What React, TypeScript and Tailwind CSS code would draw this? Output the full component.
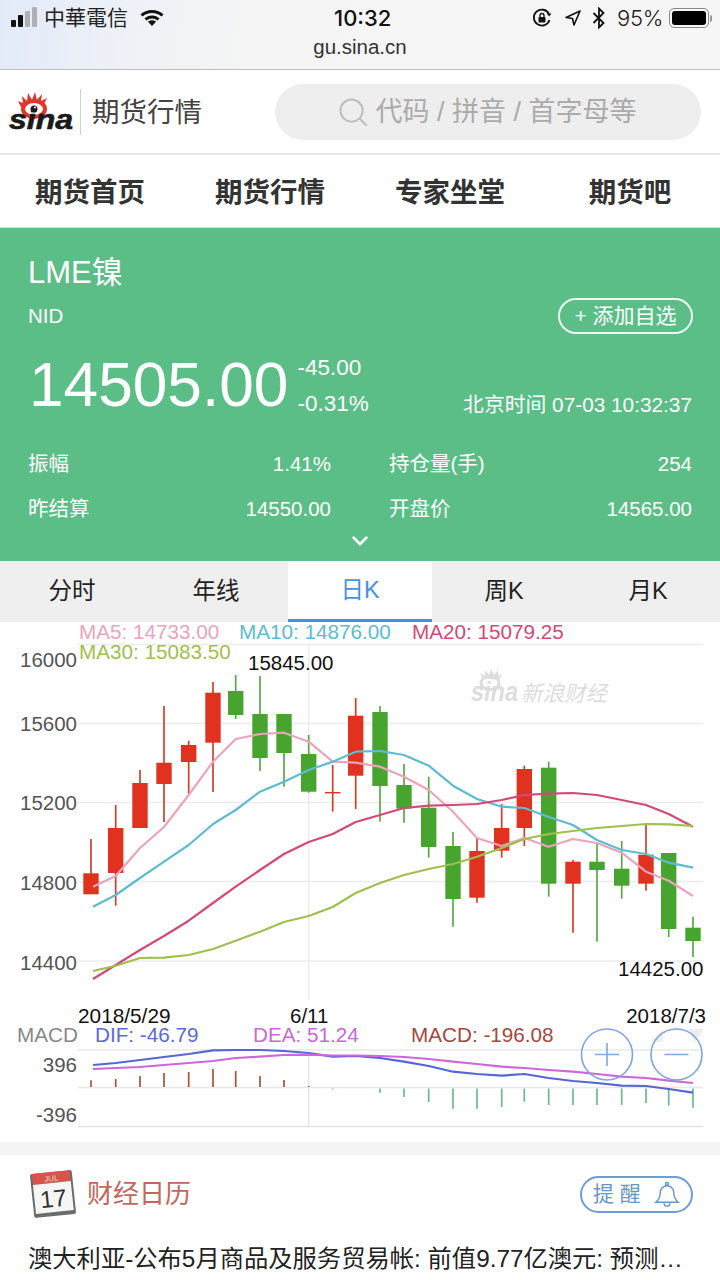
import React from "react";

const SANS = "[font-family:'Liberation_Sans','Noto_Sans_CJK_SC',sans-serif]";

type C = [number, number, number, number, number, "r" | "g"];
const candles: C[] = [
  [91, 839, 894.3, 873.3, 894.3, "r"],
  [115.7, 805, 905.7, 828, 873, "r"],
  [140, 770, 828, 783, 828, "r"],
  [164, 706, 822, 762.7, 784, "r"],
  [188.7, 740.7, 794, 745, 762, "r"],
  [213, 682, 792, 692.7, 742.7, "r"],
  [235.7, 675, 719, 691, 715, "g"],
  [260, 676, 771, 714, 758, "g"],
  [284, 714, 786.7, 714, 753, "g"],
  [308.7, 735, 792.7, 754, 791.7, "g"],
  [332.7, 765, 811.7, 792, 793.4, "r"],
  [355.7, 698, 809, 715.7, 775.7, "r"],
  [380, 706, 821.7, 712, 786, "g"],
  [404, 764, 822.7, 785, 808.7, "g"],
  [428.7, 776.7, 857.7, 807.7, 847, "g"],
  [453, 832, 926.7, 846, 899, "g"],
  [477, 839, 902.7, 851, 897.7, "r"],
  [501.7, 804, 857.7, 828, 850.7, "r"],
  [524.3, 765.7, 846, 769, 828, "r"],
  [548.7, 761.7, 896.7, 767.7, 883.7, "g"],
  [573, 860, 932.7, 861.7, 883.7, "r"],
  [597, 843, 941.7, 861.7, 870, "g"],
  [621.7, 841, 898.7, 868.7, 885.7, "g"],
  [646, 825, 890.7, 854.7, 883.7, "r"],
  [668.7, 853, 937, 853, 929, "g"],
  [693, 916.7, 957, 927.7, 941, "g"],
];

const xs = candles.map((c) => c[0]);
const line = (ys: number[]) => ys.map((y, i) => `${i === 0 ? 93 : xs[i]},${y}`).join(" ");

const ma5 = [886.7, 876, 848, 827, 795, 761.7, 739, 734, 732.7, 741.7, 761.7, 762.7, 766.7, 776.7, 790, 811.7, 838, 846, 838, 846.7, 839, 843, 852.7, 871.7, 880.7, 896];
const ma10 = [906.7, 895, 878, 861.7, 845, 824, 810, 791.7, 781.7, 770, 761.7, 751.7, 751, 755, 765.7, 785.7, 799, 806.7, 808, 817, 825, 840, 850, 854, 862.7, 867.7];
const ma20 = [979, 965, 950, 936, 920.7, 903, 886.7, 870, 854, 842, 834, 822, 815, 808, 805.7, 805, 804, 800, 795, 793.7, 793, 795, 800, 805, 814, 826.7];
const ma30 = [971, 965.7, 958, 957.7, 955, 949, 940.7, 931.7, 922, 916, 907, 893, 883, 875, 869, 864, 856.7, 848, 839, 834, 831, 828, 826, 824, 824.3, 826];
const dif = [1065, 1063, 1060, 1057, 1054, 1050.3, 1050, 1050, 1051, 1053, 1056.7, 1056, 1058, 1061.7, 1066, 1071.7, 1074, 1075.7, 1074, 1078, 1081, 1083, 1085.7, 1086, 1089, 1092.7];
const dea = [1069, 1068, 1067, 1065, 1063, 1061, 1058, 1056.7, 1055, 1054.7, 1055.5, 1055.5, 1056, 1057, 1059, 1061.7, 1064, 1066.7, 1068, 1070, 1071.7, 1074, 1076.7, 1078, 1080.7, 1083];
const bars = [1080.3, 1079, 1076, 1073, 1072, 1069, 1071, 1076, 1080, 1086, 1089.5, 1088.5, 1092.7, 1097, 1102, 1108.7, 1108.7, 1107, 1101.7, 1105, 1105, 1105, 1105, 1103, 1105.7, 1107.7];

const gridY = [644.5, 723.5, 802.5, 881.5, 961];
const axis: [string, number][] = [["16000", 667], ["15600", 731], ["15200", 810], ["14800", 890], ["14400", 970], ["396", 1072], ["-396", 1122]];

function Chart() {
  return (
    <svg viewBox="0 616 720 526" className={`block w-[720px] h-[526px] -mt-[6px] shrink-0 ${SANS}`}>
      {gridY.map((y) => (
        <line key={y} x1="78" x2="703" y1={y} y2={y} stroke="#ececec" strokeWidth="1.5" />
      ))}
      <line x1="308.7" x2="308.7" y1="645" y2="1000" stroke="#ececec" strokeWidth="1.5" />
      <line x1="78" x2="703" y1="1050" y2="1050" stroke="#e8e8e8" strokeWidth="1.5" />
      <line x1="78" x2="703" y1="1087.5" y2="1087.5" stroke="#e8e8e8" strokeWidth="1.5" />
      <line x1="78" x2="703" y1="1126.5" y2="1126.5" stroke="#e2e2e2" strokeWidth="1.5" />
      <line x1="308.7" x2="308.7" y1="1050" y2="1126" stroke="#e6e6e6" strokeWidth="1.5" />

      {/* watermark */}
      <g fill="#dddddd">
        <text x="471" y="701" fontSize="27" fontWeight="700" fontStyle="italic" textLength="47" lengthAdjust="spacingAndGlyphs">sina</text>
        <ellipse cx="490" cy="683" rx="9" ry="6.5" fill="none" stroke="#dddddd" strokeWidth="3" />
        <path d="M482 678l-2-5 5 3 0-6 4 5 2-6 3 6 4-5 0 6 4-2-3 6z" />
        <text x="521" y="701" fontSize="21.500" fontStyle="italic">新浪财经</text>
      </g>

      {candles.map(([x, hi, lo, top, bot, k]) => {
        const c = k === "r" ? "#e0321f" : "#47a52f";
        const w = k === "r" ? "#d0402f" : "#5aa848";
        return (
          <g key={x}>
            <line x1={x} x2={x} y1={hi} y2={lo} stroke={w} strokeWidth="1.7" />
            <rect x={x - 7.7} y={top} width="15.4" height={bot - top} fill={c} />
          </g>
        );
      })}

      <g fill="none" strokeWidth="2.2" strokeLinejoin="round">
        <polyline points={line(ma5)} stroke="#eba4bd" />
        <polyline points={line(ma10)} stroke="#5cbcd0" />
        <polyline points={line(ma20)} stroke="#d2497a" />
        <polyline points={line(ma30)} stroke="#9fc04c" />
      </g>

      <g fontSize="20.700">
        <text x="79" y="639" fill="#eba4bd">MA5: 14733.00</text>
        <text x="239" y="639" fill="#5cbcd0">MA10: 14876.00</text>
        <text x="412" y="639" fill="#d2497a">MA20: 15079.25</text>
        <text x="79" y="659" fill="#9fc04c">MA30: 15083.50</text>
      </g>
      <g fontSize="20.500" fill="#555" textAnchor="end">
        {axis.map(([t, y]) => (
          <text key={t} x="77" y={y}>{t}</text>
        ))}
      </g>
      <g fontSize="20.500" fill="#111">
        <text x="248" y="670">15845.00</text>
        <text x="618" y="976">14425.00</text>
        <text x="78" y="1023" fontSize="20.800">2018/5/29</text>
        <text x="290" y="1023">6/11</text>
        <text x="706" y="1023" textAnchor="end">2018/7/3</text>
      </g>
      <g fontSize="20.700">
        <text x="17" y="1042" fill="#888">MACD</text>
        <text x="95" y="1042" fill="#5a6ad8">DIF: -46.79</text>
        <text x="253" y="1042" fill="#c968d8">DEA: 51.24</text>
        <text x="411" y="1042" fill="#a5473f">MACD: -196.08</text>
      </g>

      {bars.map((y, i) => (
        <line
          key={i}
          x1={xs[i]}
          x2={xs[i]}
          y1={i < 10 ? y : 1088.5}
          y2={i < 10 ? 1087 : y}
          stroke={i < 10 ? "#a9533f" : "#6cb897"}
          strokeWidth="1.7"
        />
      ))}
      <polyline points={line(dif)} fill="none" stroke="#5566d6" strokeWidth="2.2" strokeLinejoin="round" />
      <polyline points={line(dea)} fill="none" stroke="#cf66dc" strokeWidth="2.2" strokeLinejoin="round" />

      {/* zoom controls */}
      <path d="M650 1042l13-13v13z M688 1029h16l-9 13z" fill="#eeeeee" />
      <g fill="none" stroke="#7fa6e0" strokeWidth="1.6">
        <circle cx="607" cy="1054.5" r="25.5" />
        <circle cx="676.5" cy="1054.5" r="25.5" />
        <path d="M595 1054.5h24 M607 1043v23 M664.5 1054.5h24" />
      </g>
    </svg>
  );
}

function SinaLogo() {
  return (
    <svg viewBox="0 0 70 50" className="w-[70px] h-[50px] shrink-0 [font-family:'Liberation_Sans',sans-serif]">
      <path d="M15 20l-3-6 5 2-1-7 5 5 1-8 4 7 3-8 2 8 5-6-1 7 6-3-4 8z" fill="#e2352a" />
      <ellipse cx="28" cy="22" rx="11" ry="8" fill="#fff" stroke="#e2352a" strokeWidth="4" />
      <circle cx="28" cy="22" r="3.5" fill="#2a1a1a" />
      <circle cx="29" cy="20.5" r="1" fill="#fff" />
      <text x="3" y="42" fontSize="27" fontWeight="700" fontStyle="italic" fill="#1a1a1a" stroke="#1a1a1a" strokeWidth="0.6" textLength="64" lengthAdjust="spacingAndGlyphs">sina</text>
    </svg>
  );
}

function StatusBar() {
  return (
    <div className="h-[70px] border-b border-[#bdbdbd] bg-[linear-gradient(100deg,#e2eaf9_0%,#eef1f7_18%,#f5f5f5_35%,#f6f6f6_100%)] relative shrink-0">
      <div className="h-9 flex items-center justify-between pl-[11px] pr-[8px]">
        <div className="flex items-center w-[300px]">
          <div className="flex items-end gap-[2px] h-[20px] pb-[1px]">
            <span className="w-[5px] h-[7px] rounded-[1px] bg-[#111]" />
            <span className="w-[5px] h-[12px] rounded-[1px] bg-[#111]" />
            <span className="w-[5px] h-[16px] rounded-[1px] bg-[#aeb0b6]" />
            <span className="w-[5px] h-[20px] rounded-[1px] bg-[#aeb0b6]" />
          </div>
          <span className="ml-[7px] text-[21px] text-[#222]">中華電信</span>
          <svg viewBox="0 0 24 18" className="ml-[12px] w-[24px] h-[18px]" fill="none" stroke="#111" strokeWidth="3">
            <path d="M1.5 6.5C7 1 17 1 22.5 6.5" />
            <path d="M5.5 10.5C9 7 15 7 18.5 10.5" />
            <path d="M12 17l4-4.2c-2-2-6-2-8 0z" fill="#111" stroke="none" />
          </svg>
        </div>
        <span className="text-[22px] font-medium text-[#111] [font-family:'Inter',sans-serif] absolute left-[334px]">10:32</span>
        <div className="flex items-center">
          <svg viewBox="0 0 20 20" className="w-[20px] h-[20px]" fill="none" stroke="#111" strokeWidth="1.8">
            <path d="M17.5 12A8 8 0 1 1 17 6" />
            <path d="M19.5 5.5l-2.3 3-2.5-3z" fill="#111" stroke="none" />
            <rect x="6.5" y="9" width="7" height="5.5" fill="#111" stroke="none" rx="1" />
            <path d="M8 9V7.5a2 2 0 0 1 4 0V9" strokeWidth="1.3" />
          </svg>
          <svg viewBox="0 0 16 16" className="ml-[13px] w-[16px] h-[16px]" fill="none" stroke="#111" strokeWidth="1.6" strokeLinejoin="round">
            <path d="M15 1L1 7.5l6.5 1L9 15z" />
          </svg>
          <svg viewBox="0 0 14 22" className="ml-[11px] w-[14px] h-[22px]" fill="none" stroke="#111" strokeWidth="1.8">
            <path d="M1.5 6l10 10-4.5 4.5V1.500l4.500 4.500-10 10" />
          </svg>
          <span className="ml-[11px] text-[22px] text-[#222] [font-family:'Inter',sans-serif] font-light tracking-[-0.3px]">95%</span>
          <div className="ml-[6px] w-[40px] h-[20px] rounded-[5px] border border-[#888] p-[2px]">
            <div className="w-full h-full rounded-[3px] bg-black" />
          </div>
          <span className="ml-[1px] w-[2px] h-[7px] rounded-r-sm bg-[#999]" />
        </div>
      </div>
      <div className="text-center text-[20.500px] leading-[22px] text-[#333]">gu.sina.cn</div>
    </div>
  );
}

function Header() {
  return (
    <div className="h-[85px] shrink-0 border-b-2 border-[#e6e6e6] bg-white flex items-center pl-[6px] pr-[19px]">
      <SinaLogo />
      <div className="ml-[4px] w-px h-[46px] bg-[#cfcfcf]" />
      <span className="ml-[11px] pt-[2px] text-[27.500px] text-[#444]">期货行情</span>
      <div className="ml-auto w-[426px] h-[56px] rounded-full bg-[#eeeeee] flex items-center justify-center">
        <svg viewBox="0 0 30 30" className="w-[29px] h-[29px] mr-[7px] mt-[2px]" fill="none" stroke="#bdbdbd" strokeWidth="2">
          <circle cx="13" cy="13" r="11.500" />
          <path d="M21.500 21.500l7 7" />
        </svg>
        <span className="pt-[2px] text-[27px] text-[#ababab]">代码 / 拼音 / 首字母等</span>
      </div>
    </div>
  );
}

function Nav() {
  const items = ["期货首页", "期货行情", "专家坐堂", "期货吧"];
  return (
    <div className="h-[73px] shrink-0 bg-white grid grid-cols-4 items-center border-b border-[#cfe5d8]">
      {items.map((t) => (
        <div key={t} className="pt-[4px] text-center text-[27.500px] font-bold text-[#333]">{t}</div>
      ))}
    </div>
  );
}

function Stat({ k, v }: { k: string; v: string }) {
  return (
    <div className="flex justify-between items-center">
      <span>{k}</span>
      <span>{v}</span>
    </div>
  );
}

function Quote() {
  return (
    <div className="h-[333px] shrink-0 bg-[#5cbe87] text-white px-[28px] relative">
      <div className="pt-[26px] text-[31px] leading-[38px]">LME镍</div>
      <div className="flex items-center justify-between mt-[6px]">
        <span className="text-[20.500px]">NID</span>
        <div className="w-[135px] h-[36px] rounded-full border-2 border-white/90 flex items-center justify-center text-[21px] -mr-px">+ 添加自选</div>
      </div>
      <div className="flex items-end mt-[13px] h-[74px]">
        <span className="ml-[1px] -mb-[1px] text-[62.200px] leading-[74px] [font-family:'Liberation_Sans',sans-serif]">14505.00</span>
        <div className="ml-[9px] flex flex-col text-[22.500px] leading-[36px] -mb-[1px]">
          <span>-45.00</span>
          <span>-0.31%</span>
        </div>
        <span className="ml-auto text-[20.800px] leading-[26px] mb-[3px]">北京时间 07-03 10:32:37</span>
      </div>
      <div className="grid grid-cols-2 gap-x-[58px] gap-y-[21px] mt-[31px] text-[20.500px] leading-[24px]">
        <Stat k="振幅" v="1.41%" />
        <Stat k="持仓量(手)" v="254" />
        <Stat k="昨结算" v="14550.00" />
        <Stat k="开盘价" v="14565.00" />
      </div>
      <svg viewBox="0 0 20 12" className="absolute left-[351px] top-[307px] w-[18px] h-[11px]" fill="none" stroke="#fff" strokeWidth="3">
        <path d="M2 2l8 8 8-8" />
      </svg>
    </div>
  );
}

function Tabs() {
  const items = ["分时", "年线", "日K", "周K", "月K"];
  return (
    <div className="h-[61px] shrink-0 grid grid-cols-5 bg-[#efefef] text-[23.500px] text-[#222]">
      {items.map((t) =>
        t === "日K" ? (
          <div key={t} className="bg-white border-b-[3px] border-[#4a90e2] text-[#4a90e2] flex items-center justify-center pt-[2px]">{t}</div>
        ) : (
          <div key={t} className="flex items-center justify-center">{t}</div>
        )
      )}
    </div>
  );
}

function Calendar() {
  return (
    <div className="flex-1 bg-white px-[28px]">
      <div className="flex items-center h-[76px] pt-[2px]">
        <svg viewBox="0 0 50 52" className="w-[50px] h-[52px] shrink-0">
          <g transform="rotate(-6 25 26)">
            <rect x="4" y="4" width="42" height="44" rx="2" fill="#6b6b6b" />
            <rect x="6" y="4" width="38" height="11" fill="#d9534a" />
            <rect x="6" y="15" width="38" height="29" fill="#f6f6f6" />
            <text x="25" y="13" fontSize="8" fill="#f5d5d0" textAnchor="middle" fontFamily="Liberation Sans">JUL</text>
            <text x="25" y="39" fontSize="24" fill="#333" textAnchor="middle" fontFamily="Liberation Sans">17</text>
          </g>
        </svg>
        <span className="ml-[9px] text-[26px] text-[#c2675c]">财经日历</span>
        <div className="ml-auto w-[113px] h-[37px] rounded-full border-2 border-[#6f9bd6] flex items-center pl-[11px] text-[21px] text-[#6a96cc] -mr-px">
          <span>提 醒</span>
          <svg viewBox="0 0 26 30" className="ml-[13px] w-[26px] h-[29px]" fill="none" stroke="#6a96cc" strokeWidth="1.500">
            <path d="M1.500 23c3.500-3 4.500-6 4.500-10a7 7 0 0 1 14 0c0 4 1 7 4.500 10z" />
            <circle cx="13" cy="4" r="1.500" />
            <path d="M10 24a3 3 0 0 0 6 0" />
          </svg>
        </div>
      </div>
      <div className="mt-[12px] w-[664px] text-[24.300px] leading-[32px] text-[#222] whitespace-nowrap overflow-hidden">澳大利亚-公布5月商品及服务贸易帐: 前值9.77亿澳元: 预测…</div>
    </div>
  );
}

export default function App() {
  return (
    <div className={`w-[720px] h-[1280px] overflow-hidden bg-white flex flex-col ${SANS}`}>
      <StatusBar />
      <Header />
      <Nav />
      <Quote />
      <Tabs />
      <Chart />
      <div className="h-[13px] shrink-0 bg-[#f4f4f4]" />
      <Calendar />
    </div>
  );
}
